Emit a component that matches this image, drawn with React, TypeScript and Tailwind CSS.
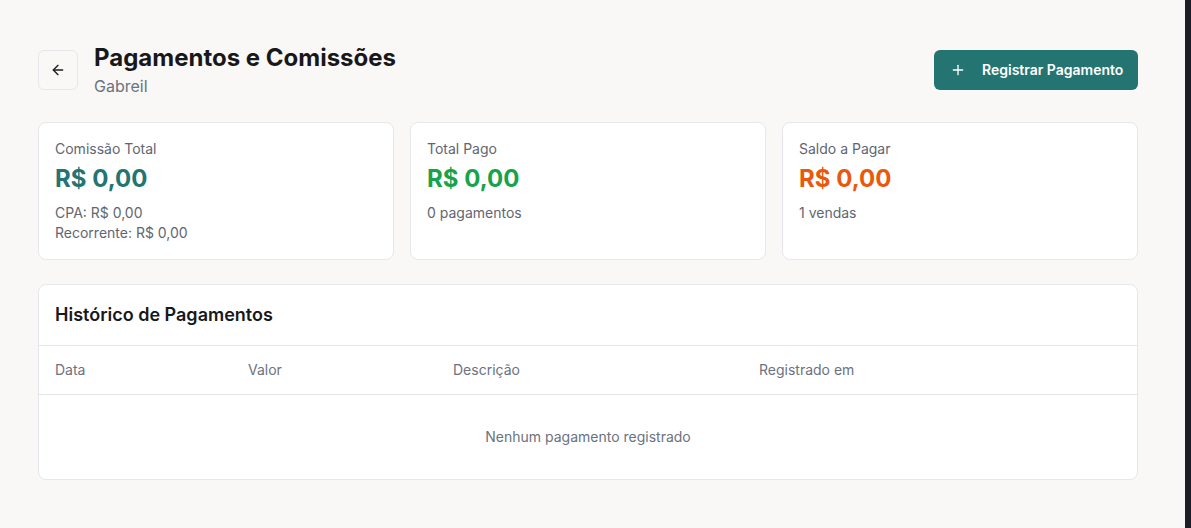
import { ArrowLeft, Plus } from "lucide-react"

type Resumo = {
  label: string
  valor: string
  cor: string
  linhas: string[]
}

const resumos: Resumo[] = [
  {
    label: "Comissão Total",
    valor: "R$ 0,00",
    cor: "text-[#237472]",
    linhas: ["CPA: R$ 0,00", "Recorrente: R$ 0,00"],
  },
  { label: "Total Pago", valor: "R$ 0,00", cor: "text-[#16a34a]", linhas: ["0 pagamentos"] },
  { label: "Saldo a Pagar", valor: "R$ 0,00", cor: "text-[#ea580c]", linhas: ["1 vendas"] },
]

function ResumoCard({ item }: { item: Resumo }) {
  return (
    <div className="rounded-lg border border-[#e5e7eb] bg-white p-4">
      <p className="text-sm leading-5 text-[#5f6672]">{item.label}</p>
      <p className={`mt-1 text-2xl leading-8 font-bold ${item.cor}`}>{item.valor}</p>
      <div className="mt-2">
        {item.linhas.map((l) => (
          <p key={l} className="text-sm leading-5 text-[#5f6672]">
            {l}
          </p>
        ))}
      </div>
    </div>
  )
}

export default function App() {
  return (
    <div className="flex min-h-[528px] w-full font-['Inter',sans-serif]">
      <div className="flex-1 bg-[#f9f8f6] pl-[38px] pt-[42px] pb-12">
        <div className="w-[1100px]">
          {/* Cabeçalho */}
          <div className="flex items-center justify-between">
            <div className="flex items-center gap-4">
              <button className="flex h-10 w-10 items-center justify-center rounded-md border border-[#e5e7eb] bg-[#f9f8f6] text-[#1c1c1c]">
                <ArrowLeft size={16} />
              </button>
              <div>
                <h1 className="text-2xl leading-8 font-bold text-[#18181b]">Pagamentos e Comissões</h1>
                <p className="text-base leading-6 text-[#6b7280]">Gabreil</p>
              </div>
            </div>
            <button className="flex h-10 w-[204px] items-center gap-4 rounded-md bg-[#247572] pl-4 text-sm font-semibold text-white">
              <Plus size={16} />
              Registrar Pagamento
            </button>
          </div>

          {/* Resumo */}
          <div className="mt-6 grid grid-cols-3 gap-4">
            {resumos.map((r) => (
              <ResumoCard key={r.label} item={r} />
            ))}
          </div>

          {/* Histórico */}
          <div className="mt-6 rounded-lg border border-[#e5e7eb] bg-white">
            <div className="border-b border-[#e5e7eb] p-4">
              <h2 className="text-lg leading-7 font-semibold text-[#18181b]">Histórico de Pagamentos</h2>
            </div>
            <table className="w-full table-fixed text-sm">
              <colgroup>
                <col className="w-[193px]" />
                <col className="w-[205px]" />
                <col className="w-[306px]" />
                <col />
              </colgroup>
              <thead>
                <tr className="border-b border-[#e5e7eb]">
                  <th className="h-12 px-4 text-left font-normal text-[#6b7280]">Data</th>
                  <th className="h-12 px-4 text-left font-normal text-[#6b7280]">Valor</th>
                  <th className="h-12 px-4 text-left font-normal text-[#6b7280]">Descrição</th>
                  <th className="h-12 px-4 text-left font-normal text-[#6b7280]">Registrado em</th>
                </tr>
              </thead>
              <tbody>
                <tr>
                  <td colSpan={4} className="py-8 text-center leading-5 text-[#6b7280]">
                    Nenhum pagamento registrado
                  </td>
                </tr>
              </tbody>
            </table>
          </div>
        </div>
      </div>
      <div className="w-[6px] bg-[#1b1e27]" />
    </div>
  )
}
